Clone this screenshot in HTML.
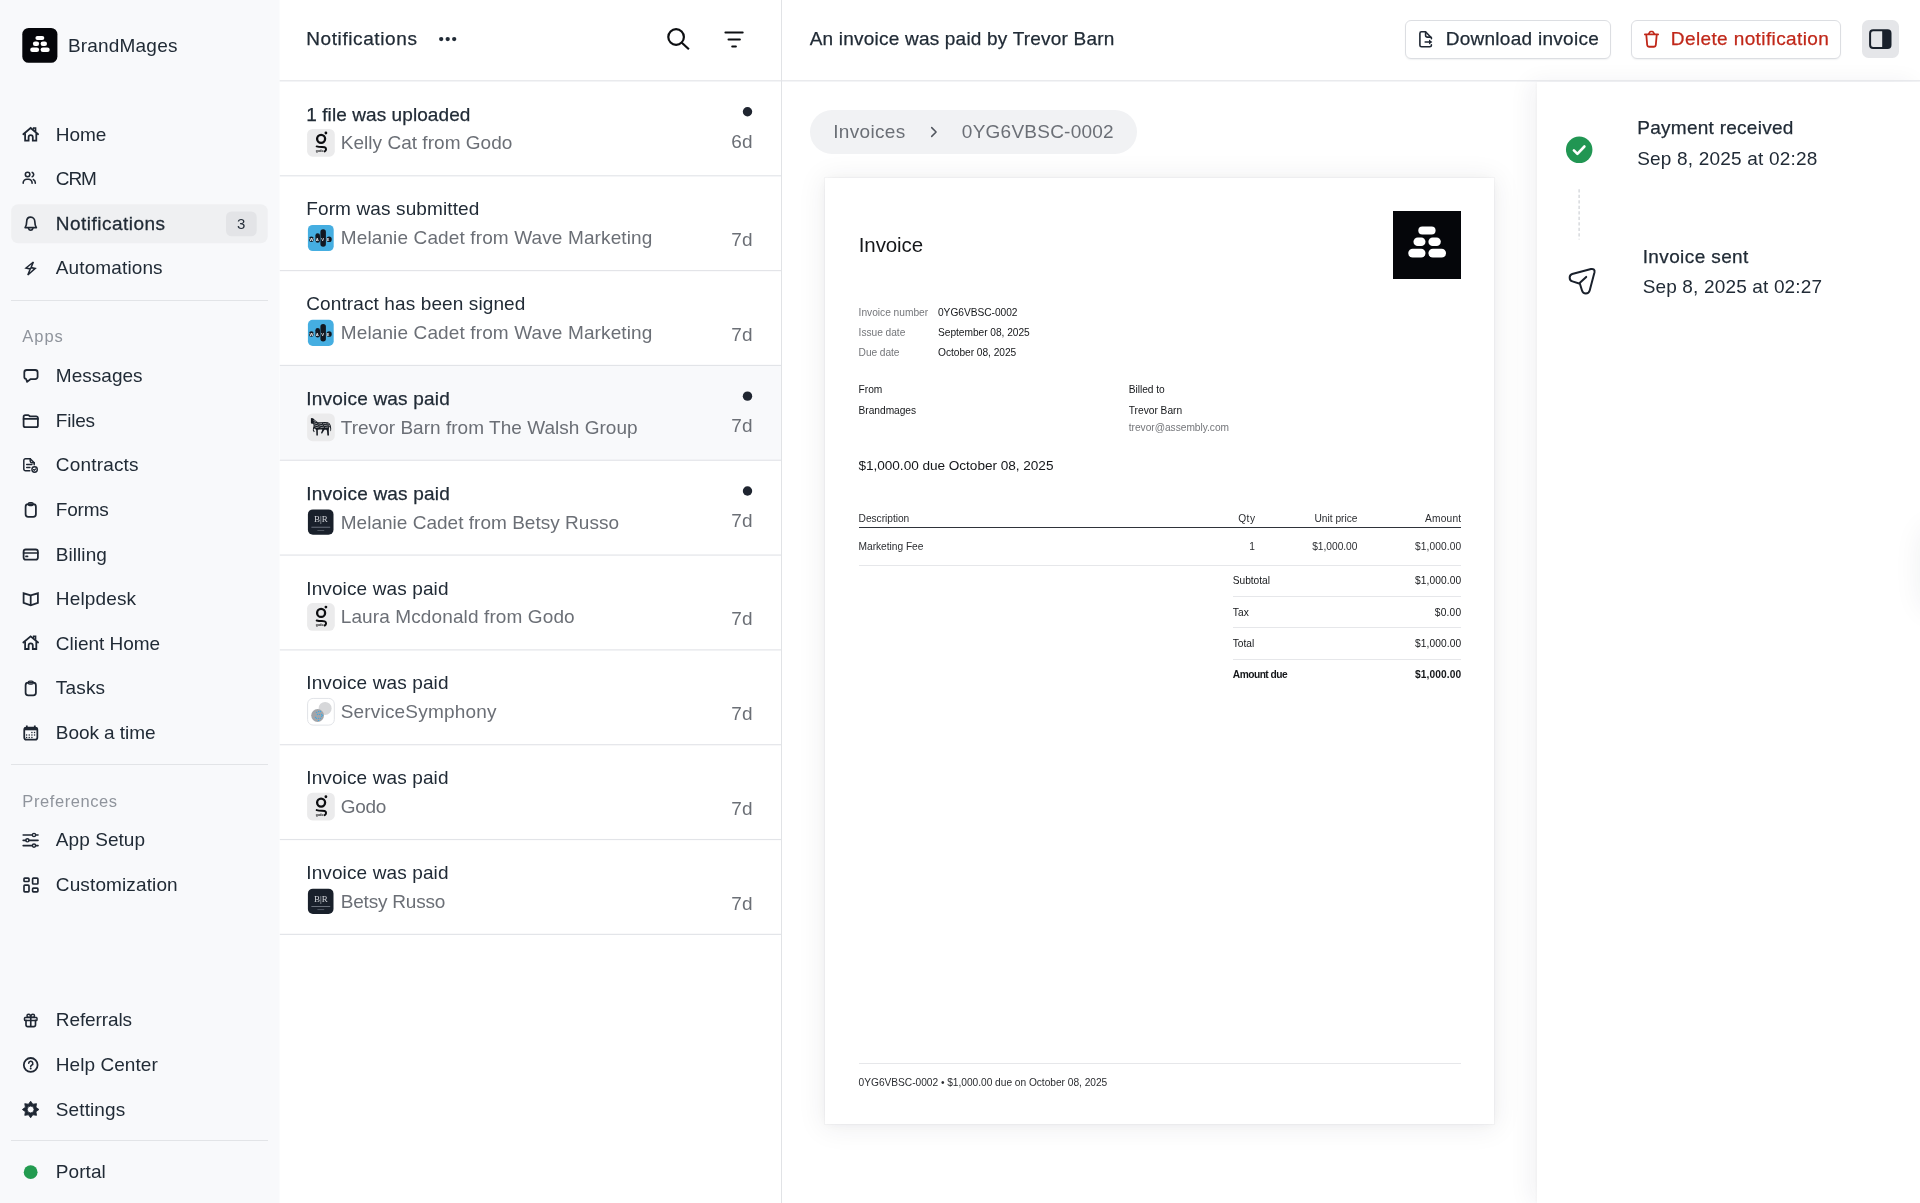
<!DOCTYPE html>
<html lang="en"><head><meta charset="utf-8"><title>Notifications - BrandMages</title>
<style>
html,body{margin:0;padding:0;background:#fff}
body{width:1920px;height:1203px;overflow:hidden;position:relative;font-family:"Liberation Sans",sans-serif}
#root{position:absolute;left:0;top:0;width:1920px;height:1203px;will-change:transform}
.t{position:absolute;white-space:nowrap;line-height:1;margin:0}
.b{position:absolute}
.btn{border:1px solid #dcdee2;border-radius:6px;box-sizing:border-box;background:#fff;box-shadow:0 1px 1.500px rgba(20,30,50,.06)}
.ov{position:absolute;left:0;top:0;pointer-events:none}
</style></head><body><div id="root">
<svg class="ov" width="281" height="1203" viewBox="0 0 281 1203"><rect x="0" y="0" width="279.500" height="1203" fill="#f8f9fb"/></svg>
<svg class="ov" width="280" height="100" viewBox="0 0 280 100"><rect x="22.300" y="27.900" width="35.100" height="34.900" rx="6.300" fill="#05060a"/></svg>
<div class="t" style="top:35px;line-height:21px;left:67.99px;font-size:19px;color:#212b36;letter-spacing:0.185px">BrandMages</div>
<svg class="ov" width="280" height="260" viewBox="0 0 280 260"><rect x="11.200" y="204.300" width="256.500" height="38.900" rx="7" fill="#eff0f2"/><rect x="226" y="211.500" width="30.700" height="24.750" rx="5.500" fill="#e3e4e7"/></svg>
<div class="t" style="top:215px;line-height:17px;left:237.10px;font-size:15px;color:#27303b">3</div>
<div class="t" style="top:124px;line-height:21px;left:55.84px;font-size:19px;color:#212b36;letter-spacing:-0.064px">Home</div>
<div class="t" style="top:168px;line-height:21px;left:55.84px;font-size:19px;color:#212b36;letter-spacing:-1.140px">CRM</div>
<div class="t" style="top:213px;line-height:21px;left:55.84px;font-size:19px;color:#212b36;letter-spacing:0.479px;-webkit-text-stroke:0.28px #212b36">Notifications</div>
<div class="t" style="top:257px;line-height:21px;left:55.84px;font-size:19px;color:#212b36;letter-spacing:0.113px">Automations</div>
<div class="t" style="top:365px;line-height:21px;left:55.84px;font-size:19px;color:#212b36;letter-spacing:0.021px">Messages</div>
<div class="t" style="top:410px;line-height:21px;left:55.84px;font-size:19px;color:#212b36;letter-spacing:-0.219px">Files</div>
<div class="t" style="top:454px;line-height:21px;left:55.84px;font-size:19px;color:#212b36;letter-spacing:0.179px">Contracts</div>
<div class="t" style="top:499px;line-height:21px;left:55.84px;font-size:19px;color:#212b36;letter-spacing:-0.209px">Forms</div>
<div class="t" style="top:544px;line-height:21px;left:55.84px;font-size:19px;color:#212b36;letter-spacing:0.050px">Billing</div>
<div class="t" style="top:588px;line-height:21px;left:55.84px;font-size:19px;color:#212b36;letter-spacing:0.147px">Helpdesk</div>
<div class="t" style="top:633px;line-height:21px;left:55.84px;font-size:19px;color:#212b36;letter-spacing:-0.030px">Client Home</div>
<div class="t" style="top:677px;line-height:21px;left:55.84px;font-size:19px;color:#212b36;letter-spacing:0.168px">Tasks</div>
<div class="t" style="top:722px;line-height:21px;left:55.84px;font-size:19px;color:#212b36;letter-spacing:-0.059px">Book a time</div>
<div class="t" style="top:829px;line-height:21px;left:55.84px;font-size:19px;color:#212b36;letter-spacing:0.063px">App Setup</div>
<div class="t" style="top:874px;line-height:21px;left:55.84px;font-size:19px;color:#212b36;letter-spacing:0.121px">Customization</div>
<div class="t" style="top:1009px;line-height:21px;left:55.84px;font-size:19px;color:#212b36;letter-spacing:-0.105px">Referrals</div>
<div class="t" style="top:1054px;line-height:21px;left:55.84px;font-size:19px;color:#212b36;letter-spacing:0.056px">Help Center</div>
<div class="t" style="top:1099px;line-height:21px;left:55.84px;font-size:19px;color:#212b36;letter-spacing:0.098px">Settings</div>
<div class="t" style="top:1161px;line-height:21px;left:55.84px;font-size:19px;color:#212b36;letter-spacing:0.061px">Portal</div>
<div class="t" style="top:327px;line-height:18px;left:22.34px;font-size:16.5px;color:#8f949c;letter-spacing:0.961px">Apps</div>
<div class="t" style="top:792px;line-height:18px;left:22.34px;font-size:16.5px;color:#8f949c;letter-spacing:0.578px">Preferences</div>
<div class="b" style="left:11px;top:299.6px;width:257px;height:1px;background:#e2e4e7"></div>
<div class="b" style="left:11px;top:764px;width:257px;height:1px;background:#e2e4e7"></div>
<div class="b" style="left:11px;top:1140.2px;width:257px;height:1px;background:#e2e4e7"></div>
<div class="b" style="left:781px;top:0;width:1px;height:1203px;background:#e1e3e6"></div>
<div class="t" style="top:28px;line-height:21px;left:306.24px;font-size:19px;color:#212b36;letter-spacing:0.596px;-webkit-text-stroke:0.25px #212b36">Notifications</div>
<div class="t" style="top:104px;line-height:21px;left:306.24px;font-size:19px;color:#212b36;letter-spacing:0.082px;-webkit-text-stroke:0.25px #212b36">1 file was uploaded</div>
<div class="t" style="top:132px;line-height:21px;left:340.74px;font-size:19px;color:#6b6f76;letter-spacing:0.032px">Kelly Cat from Godo</div>
<div class="t" style="top:131px;line-height:21px;right:1167.50px;font-size:19px;color:#6b6f76">6d</div>
<div class="t" style="top:198px;line-height:21px;left:306.24px;font-size:19px;color:#212b36;letter-spacing:0.123px">Form was submitted</div>
<div class="t" style="top:227px;line-height:21px;left:340.74px;font-size:19px;color:#6b6f76;letter-spacing:0.125px">Melanie Cadet from Wave Marketing</div>
<div class="t" style="top:229px;line-height:21px;right:1167.50px;font-size:19px;color:#6b6f76">7d</div>
<div class="t" style="top:293px;line-height:21px;left:306.24px;font-size:19px;color:#212b36;letter-spacing:0.113px">Contract has been signed</div>
<div class="t" style="top:322px;line-height:21px;left:340.74px;font-size:19px;color:#6b6f76;letter-spacing:0.125px">Melanie Cadet from Wave Marketing</div>
<div class="t" style="top:324px;line-height:21px;right:1167.50px;font-size:19px;color:#6b6f76">7d</div>
<div class="b" style="left:280px;top:365.96px;width:501px;height:93.82px;background:#f8f9fb"></div>
<div class="t" style="top:388px;line-height:21px;left:306.24px;font-size:19px;color:#212b36;letter-spacing:0.211px;-webkit-text-stroke:0.25px #212b36">Invoice was paid</div>
<div class="t" style="top:417px;line-height:21px;left:340.74px;font-size:19px;color:#6b6f76;letter-spacing:0.027px">Trevor Barn from The Walsh Group</div>
<div class="t" style="top:415px;line-height:21px;right:1167.50px;font-size:19px;color:#6b6f76">7d</div>
<div class="t" style="top:483px;line-height:21px;left:306.24px;font-size:19px;color:#212b36;letter-spacing:0.211px;-webkit-text-stroke:0.25px #212b36">Invoice was paid</div>
<div class="t" style="top:512px;line-height:21px;left:340.74px;font-size:19px;color:#6b6f76;letter-spacing:0.018px">Melanie Cadet from Betsy Russo</div>
<div class="t" style="top:510px;line-height:21px;right:1167.50px;font-size:19px;color:#6b6f76">7d</div>
<div class="t" style="top:578px;line-height:21px;left:306.24px;font-size:19px;color:#212b36;letter-spacing:0.118px">Invoice was paid</div>
<div class="t" style="top:606px;line-height:21px;left:340.74px;font-size:19px;color:#6b6f76;letter-spacing:0.115px">Laura Mcdonald from Godo</div>
<div class="t" style="top:608px;line-height:21px;right:1167.50px;font-size:19px;color:#6b6f76">7d</div>
<div class="t" style="top:672px;line-height:21px;left:306.24px;font-size:19px;color:#212b36;letter-spacing:0.118px">Invoice was paid</div>
<div class="t" style="top:701px;line-height:21px;left:340.74px;font-size:19px;color:#6b6f76;letter-spacing:0.180px">ServiceSymphony</div>
<div class="t" style="top:703px;line-height:21px;right:1167.50px;font-size:19px;color:#6b6f76">7d</div>
<div class="t" style="top:767px;line-height:21px;left:306.24px;font-size:19px;color:#212b36;letter-spacing:0.118px">Invoice was paid</div>
<div class="t" style="top:796px;line-height:21px;left:340.74px;font-size:19px;color:#6b6f76;letter-spacing:-0.280px">Godo</div>
<div class="t" style="top:798px;line-height:21px;right:1167.50px;font-size:19px;color:#6b6f76">7d</div>
<div class="t" style="top:862px;line-height:21px;left:306.24px;font-size:19px;color:#212b36;letter-spacing:0.118px">Invoice was paid</div>
<div class="t" style="top:891px;line-height:21px;left:340.74px;font-size:19px;color:#6b6f76;letter-spacing:-0.201px">Betsy Russo</div>
<div class="t" style="top:893px;line-height:21px;right:1167.50px;font-size:19px;color:#6b6f76">7d</div>
<div class="t" style="top:28px;line-height:21px;left:809.74px;font-size:19px;color:#212b36;letter-spacing:0.207px;-webkit-text-stroke:0.25px #212b36">An invoice was paid by Trevor Barn</div>
<div class="b btn" style="left:1405px;top:20px;width:206px;height:39px"></div>
<div class="t" style="top:28px;line-height:21px;left:1445.64px;font-size:19px;color:#212b36;letter-spacing:0.281px;-webkit-text-stroke:0.25px #212b36">Download invoice</div>
<div class="b btn" style="left:1631px;top:20px;width:210px;height:39px"></div>
<div class="t" style="top:28px;line-height:21px;left:1670.84px;font-size:19px;color:#c0281a;letter-spacing:0.384px;-webkit-text-stroke:0.25px #c0281a">Delete notification</div>
<div class="b" style="left:1861.600px;top:20.300px;width:37.600px;height:38.200px;border-radius:6.500px;background:#e5e6e9"></div>
<div class="b" style="left:1536.700px;top:81.500px;width:383.300px;height:1121.500px;background:#fff;box-shadow:-7px 0 22px rgba(30,40,70,.06),-1px 0 3px rgba(30,40,70,.035)"></div>
<div class="t" style="top:117px;line-height:21px;left:1637.24px;font-size:19px;color:#212b36;letter-spacing:0.271px;-webkit-text-stroke:0.25px #212b36">Payment received</div>
<div class="t" style="top:148px;line-height:21px;left:1637.24px;font-size:19px;color:#212b36;letter-spacing:0.195px">Sep 8, 2025 at 02:28</div>
<div class="t" style="top:246px;line-height:21px;left:1642.64px;font-size:19px;color:#212b36;letter-spacing:0.395px;-webkit-text-stroke:0.25px #212b36">Invoice sent</div>
<div class="t" style="top:276px;line-height:21px;left:1642.64px;font-size:19px;color:#212b36;letter-spacing:0.159px">Sep 8, 2025 at 02:27</div>
<div class="b" style="left:1924px;top:530px;width:40px;height:78px;border-radius:10px;box-shadow:0 0 30px 2px rgba(30,40,70,.075)"></div>
<div class="b" style="left:809.700px;top:109.600px;width:327.600px;height:44.500px;border-radius:22.500px;background:#f1f2f4"></div>
<div class="t" style="top:121px;line-height:21px;left:833.24px;font-size:19px;color:#6b6f76;letter-spacing:0.320px">Invoices</div>
<div class="t" style="top:121px;line-height:21px;left:961.84px;font-size:19px;color:#6b6f76;letter-spacing:0.243px">0YG6VBSC-0002</div>
<div class="b" style="left:824.800px;top:177.700px;width:669.600px;height:946.500px;background:#fff;box-shadow:0 0 0 1px rgba(20,30,60,.03),0 1px 10px rgba(20,30,60,.045),0 2px 26px 3px rgba(20,30,60,.065)"></div>
<div class="t" style="top:233px;line-height:23px;left:858.78px;font-size:20.5px;color:#15171a;letter-spacing:-0.104px">Invoice</div>
<div class="b" style="left:1392.800px;top:211px;width:68.200px;height:68px;background:#05060a"></div>
<div class="t" style="top:307px;line-height:11px;left:858.59px;font-size:10.2px;color:#74767a;letter-spacing:-0.011px">Invoice number</div>
<div class="t" style="top:307px;line-height:11px;left:937.99px;font-size:10.2px;color:#15171a;letter-spacing:-0.030px">0YG6VBSC-0002</div>
<div class="t" style="top:327px;line-height:11px;left:858.59px;font-size:10.2px;color:#74767a;letter-spacing:-0.030px">Issue date</div>
<div class="t" style="top:327px;line-height:11px;left:937.99px;font-size:10.2px;color:#15171a;letter-spacing:-0.032px">September 08, 2025</div>
<div class="t" style="top:347px;line-height:11px;left:858.59px;font-size:10.2px;color:#74767a;letter-spacing:-0.057px">Due date</div>
<div class="t" style="top:347px;line-height:11px;left:937.99px;font-size:10.2px;color:#15171a;letter-spacing:-0.029px">October 08, 2025</div>
<div class="t" style="top:384px;line-height:11px;left:858.59px;font-size:10.2px;color:#15171a;letter-spacing:-0.031px">From</div>
<div class="t" style="top:405px;line-height:11px;left:858.59px;font-size:10.2px;color:#15171a;letter-spacing:-0.027px">Brandmages</div>
<div class="t" style="top:384px;line-height:11px;left:1128.79px;font-size:10.2px;color:#15171a;letter-spacing:-0.036px">Billed to</div>
<div class="t" style="top:405px;line-height:11px;left:1128.79px;font-size:10.2px;color:#15171a;letter-spacing:-0.007px">Trevor Barn</div>
<div class="t" style="top:422px;line-height:11px;left:1128.79px;font-size:10.2px;color:#74767a;letter-spacing:-0.026px">trevor@assembly.com</div>
<div class="t" style="top:458px;line-height:15px;left:858.46px;font-size:13.6px;color:#15171a;letter-spacing:-0.026px">$1,000.00 due October 08, 2025</div>
<div class="t" style="top:513px;line-height:11px;left:858.59px;font-size:10.2px;color:#2b2d31;letter-spacing:-0.032px">Description</div>
<div class="t" style="top:513px;line-height:11px;left:1238.19px;font-size:10.2px;color:#2b2d31;letter-spacing:0.470px">Qty</div>
<div class="t" style="top:513px;line-height:11px;left:1314.49px;font-size:10.2px;color:#2b2d31;letter-spacing:-0.009px">Unit price</div>
<div class="t" style="top:513px;line-height:11px;left:1425.09px;font-size:10.2px;color:#2b2d31;letter-spacing:0.190px">Amount</div>
<div class="b" style="left:858.500px;top:526.800px;width:602.500px;height:1.200px;background:#2f333a"></div>
<div class="t" style="top:541px;line-height:11px;left:858.59px;font-size:10.2px;color:#2b2d31;letter-spacing:-0.025px">Marketing Fee</div>
<div class="t" style="top:541px;line-height:11px;left:1249.19px;font-size:10.2px;color:#2b2d31">1</div>
<div class="t" style="top:541px;line-height:11px;left:1312.19px;font-size:10.2px;color:#2b2d31;letter-spacing:-0.010px">$1,000.00</div>
<div class="t" style="top:541px;line-height:11px;left:1415.09px;font-size:10.2px;color:#2b2d31;letter-spacing:0.090px">$1,000.00</div>
<div class="b" style="left:858.500px;top:564.700px;width:602.500px;height:1px;background:#e6e7ea"></div>
<div class="t" style="top:575px;line-height:11px;left:1232.79px;font-size:10.2px;color:#15171a;letter-spacing:-0.033px">Subtotal</div>
<div class="t" style="top:575px;line-height:11px;left:1415.09px;font-size:10.2px;color:#15171a;letter-spacing:0.090px">$1,000.00</div>
<div class="b" style="left:1232.800px;top:596px;width:228.200px;height:1px;background:#e6e7ea"></div>
<div class="t" style="top:607px;line-height:11px;left:1232.79px;font-size:10.2px;color:#15171a;letter-spacing:0.067px">Tax</div>
<div class="t" style="top:607px;line-height:11px;left:1434.79px;font-size:10.2px;color:#15171a;letter-spacing:0.220px">$0.00</div>
<div class="b" style="left:1232.800px;top:627.2px;width:228.200px;height:1px;background:#e6e7ea"></div>
<div class="t" style="top:638px;line-height:11px;left:1232.79px;font-size:10.2px;color:#15171a;letter-spacing:-0.035px">Total</div>
<div class="t" style="top:638px;line-height:11px;left:1415.09px;font-size:10.2px;color:#15171a;letter-spacing:0.090px">$1,000.00</div>
<div class="b" style="left:1232.800px;top:658.8px;width:228.200px;height:1px;background:#e6e7ea"></div>
<div class="t" style="top:669px;line-height:11px;left:1232.79px;font-size:10.2px;color:#15171a;letter-spacing:-0.500px;font-weight:700">Amount due</div>
<div class="t" style="top:669px;line-height:11px;left:1415.09px;font-size:10.2px;color:#15171a;letter-spacing:0.090px;font-weight:700">$1,000.00</div>
<div class="b" style="left:858.500px;top:1062.600px;width:602.500px;height:1px;background:#e6e7ea"></div>
<div class="t" style="top:1077px;line-height:11px;left:858.59px;font-size:10.2px;color:#2b2d31;letter-spacing:-0.027px">0YG6VBSC-0002 • $1,000.00 due on October 08, 2025</div>
<svg class="ov" width="1920" height="1203" viewBox="0 0 1920 1203">
<rect x="35.40" y="36.00" width="8.90" height="4.10" rx="2.05" fill="#fff"/>
<rect x="32.90" y="41.60" width="6.20" height="4.40" rx="2.20" fill="#fff"/>
<rect x="40.60" y="41.60" width="6.40" height="4.40" rx="2.20" fill="#fff"/>
<rect x="30.20" y="47.40" width="8.90" height="4.60" rx="2.30" fill="#fff"/>
<rect x="40.60" y="47.40" width="9.10" height="4.60" rx="2.30" fill="#fff"/>
<path d="M23.3 134.20 L30.65 128.00 L38.1 134.20" fill="none" stroke="#1f2733" stroke-width="1.77" stroke-linejoin="miter" stroke-linecap="round" />
<path d="M25.1 133.20 V140.70 H28.6 V137.20 a2.1 2.1 0 0 1 4.2 0 V140.70 H36.3 V133.20" fill="none" stroke="#1f2733" stroke-width="1.77" stroke-linejoin="miter" stroke-linecap="butt" />
<path d="M33.6 129.60 V128.00 H35.6 V131.40" fill="none" stroke="#1f2733" stroke-width="1.49" stroke-linejoin="miter" stroke-linecap="butt" />
<path d="M23.2 183.20 v-.4 a3.6 3.6 0 0 1 3.6-3.6 h1.7 a3.6 3.6 0 0 1 3.6 3.6 v.4" fill="none" stroke="#1f2733" stroke-width="1.58" stroke-linejoin="round" stroke-linecap="round" />
<circle cx="27.6" cy="174.50" r="2.25" fill="none" stroke="#1f2733" stroke-width="1.58"/>
<path d="M32.2 172.40 a2.3 2.3 0 0 1 0 4.300" fill="none" stroke="#1f2733" stroke-width="1.58" stroke-linejoin="round" stroke-linecap="round" />
<path d="M33.3 179.50 a3.6 3.6 0 0 1 2 3.300 v.4" fill="none" stroke="#1f2733" stroke-width="1.58" stroke-linejoin="round" stroke-linecap="round" />
<path d="M30.700 217.20 C28.200 217.20 26.700 219.20 26.700 221.60 C26.700 224.20 26.200 226.00 25.100 227.60 H36.400 C35.300 226.00 34.800 224.20 34.800 221.60 C34.800 219.20 33.200 217.20 30.700 217.20z" fill="none" stroke="#1f2733" stroke-width="1.67" stroke-linejoin="round" stroke-linecap="round" />
<path d="M28.500 228.60 a2.300 2.300 0 0 0 4.400 0" fill="none" stroke="#1f2733" stroke-width="1.58" stroke-linejoin="round" stroke-linecap="round" />
<path d="M33.400 262.00 L26.000 268.00 L30.300 268.90 L27.800 275.00 L35.200 268.40 L31 267.60 Z" fill="none" stroke="#1f2733" stroke-width="1.49" stroke-linejoin="miter" stroke-linecap="round" />
<path d="M37.600 372.40 v4.400 a2.400 2.400 0 0 1-2.400 2.400 H30.400 L27.100 381.90 L26.200 379.20 A2.400 2.400 0 0 1 24.300 376.80 V372.40 a2.400 2.400 0 0 1 2.400-2.400 h8.500 a2.400 2.400 0 0 1 2.400 2.400z" fill="none" stroke="#1f2733" stroke-width="1.77" stroke-linejoin="round" stroke-linecap="round" />
<path d="M23.600 416.80 a1.700 1.700 0 0 1 1.700-1.700 h3.100 l1.500 1.200 h6.300 a1.700 1.700 0 0 1 1.700 1.700 v7.500 a1.700 1.700 0 0 1-1.700 1.700 H25.300 a1.700 1.700 0 0 1-1.700-1.700z" fill="none" stroke="#1f2733" stroke-width="1.77" stroke-linejoin="round" stroke-linecap="round" />
<path d="M23.600 418.90 H37.900" fill="none" stroke="#1f2733" stroke-width="1.77" stroke-linejoin="round" stroke-linecap="round" />
<path d="M29.800 470.80 H25.500 a1.700 1.700 0 0 1-1.700-1.700 V460.50 a1.700 1.700 0 0 1 1.700-1.700 h4.700 l4 4 v2" fill="none" stroke="#1f2733" stroke-width="1.49" stroke-linejoin="round" stroke-linecap="round" />
<path d="M30.200 458.80 v2.300 a1.700 1.700 0 0 0 1.700 1.700 h2.300" fill="none" stroke="#1f2733" stroke-width="1.49" stroke-linejoin="round" stroke-linecap="round" />
<path d="M26.700 464.40 h5.200 M26.700 467.60 h3.200" fill="none" stroke="#1f2733" stroke-width="1.49" stroke-linejoin="round" stroke-linecap="round" />
<circle cx="34.600" cy="469.50" r="2.700" fill="none" stroke="#1f2733" stroke-width="1.40"/>
<path d="M33.400 469.50 l.900.900 1.500-1.600" fill="none" stroke="#1f2733" stroke-width="1.12" stroke-linejoin="round" stroke-linecap="round" />
<rect x="25.600" y="504.10" width="10.300" height="12.800" rx="2.600" fill="none" stroke="#1f2733" stroke-width="1.77"/>
<rect x="28.200" y="502.70" width="5.100" height="3" rx="1.500" fill="none" stroke="#1f2733" stroke-width="1.21"/>
<rect x="23.600" y="549.50" width="14.300" height="10.100" rx="2.200" fill="none" stroke="#1f2733" stroke-width="1.77"/>
<path d="M23.600 553.00 H37.900" fill="none" stroke="#1f2733" stroke-width="1.67" stroke-linejoin="round" stroke-linecap="round" />
<path d="M26 556.40 h1.500" fill="none" stroke="#1f2733" stroke-width="1.77" stroke-linejoin="round" stroke-linecap="round" />
<path d="M30.700 595.40 L23.600 593.30 V602.90 L30.700 605.30 L37.900 602.90 V593.30 Z" fill="none" stroke="#1f2733" stroke-width="1.77" stroke-linejoin="miter" stroke-linecap="round" />
<path d="M30.700 595.40 V605.30" fill="none" stroke="#1f2733" stroke-width="1.77" stroke-linejoin="round" stroke-linecap="butt" />
<path d="M23.3 642.50 L30.65 636.30 L38.1 642.50" fill="none" stroke="#1f2733" stroke-width="1.77" stroke-linejoin="miter" stroke-linecap="round" />
<path d="M25.1 641.50 V649.00 H28.6 V645.50 a2.1 2.1 0 0 1 4.2 0 V649.00 H36.3 V641.50" fill="none" stroke="#1f2733" stroke-width="1.77" stroke-linejoin="miter" stroke-linecap="butt" />
<path d="M33.6 637.90 V636.30 H35.6 V639.70" fill="none" stroke="#1f2733" stroke-width="1.49" stroke-linejoin="miter" stroke-linecap="butt" />
<rect x="25.600" y="682.60" width="10.300" height="12.800" rx="2.600" fill="none" stroke="#1f2733" stroke-width="1.77"/>
<rect x="28.200" y="681.20" width="5.100" height="3" rx="1.500" fill="none" stroke="#1f2733" stroke-width="1.21"/>
<rect x="24.250" y="727.60" width="13.100" height="12" rx="2.200" fill="none" stroke="#1f2733" stroke-width="1.77"/>
<rect x="24.250" y="727.60" width="13.100" height="2.700" fill="#1f2733"/>
<path d="M26.800 725.60 v1.800 M34.800 725.60 v1.800" fill="none" stroke="#1f2733" stroke-width="1.77" stroke-linejoin="round" stroke-linecap="butt" />
<rect x="31.25" y="731.85" width="1.300" height="1.300" fill="#1f2733"/><rect x="33.90" y="731.85" width="1.300" height="1.300" fill="#1f2733"/><rect x="25.95" y="734.35" width="1.300" height="1.300" fill="#1f2733"/><rect x="28.60" y="734.35" width="1.300" height="1.300" fill="#1f2733"/><rect x="31.25" y="734.35" width="1.300" height="1.300" fill="#1f2733"/><rect x="33.90" y="734.35" width="1.300" height="1.300" fill="#1f2733"/><rect x="25.95" y="736.85" width="1.300" height="1.300" fill="#1f2733"/><rect x="28.60" y="736.85" width="1.300" height="1.300" fill="#1f2733"/><rect x="31.25" y="736.85" width="1.300" height="1.300" fill="#1f2733"/>
<path d="M23.200 835.00 H32.30 M35.70 835.00 H38" fill="none" stroke="#1f2733" stroke-width="1.67" stroke-linejoin="round" stroke-linecap="round" />
<circle cx="34" cy="835.00" r="1.600" fill="none" stroke="#1f2733" stroke-width="1.40"/>
<path d="M23.200 840.30 H25.70 M29.10 840.30 H38" fill="none" stroke="#1f2733" stroke-width="1.67" stroke-linejoin="round" stroke-linecap="round" />
<circle cx="27.4" cy="840.30" r="1.600" fill="none" stroke="#1f2733" stroke-width="1.40"/>
<path d="M23.200 845.60 H32.30 M35.70 845.60 H38" fill="none" stroke="#1f2733" stroke-width="1.67" stroke-linejoin="round" stroke-linecap="round" />
<circle cx="34" cy="845.60" r="1.600" fill="none" stroke="#1f2733" stroke-width="1.40"/>
<rect x="24" y="878.20" width="5" height="3.3" rx=".800" fill="none" stroke="#1f2733" stroke-width="1.67"/>
<rect x="32.6" y="878.20" width="5.3" height="5.8" rx=".800" fill="none" stroke="#1f2733" stroke-width="1.67"/>
<rect x="24" y="885.20" width="5" height="6.7" rx=".800" fill="none" stroke="#1f2733" stroke-width="1.67"/>
<rect x="32.6" y="888.20" width="5.3" height="3.7" rx=".800" fill="none" stroke="#1f2733" stroke-width="1.67"/>
<rect x="24.500" y="1017.40" width="12.500" height="3.100" rx=".800" fill="none" stroke="#1f2733" stroke-width="1.49"/>
<path d="M26 1020.40 v4.700 a1.600 1.600 0 0 0 1.600 1.600 h6.300 a1.600 1.600 0 0 0 1.600-1.600 v-4.700" fill="none" stroke="#1f2733" stroke-width="1.67" stroke-linejoin="round" stroke-linecap="round" />
<path d="M30.750 1017.50 v9.100" fill="none" stroke="#1f2733" stroke-width="1.67" stroke-linejoin="round" stroke-linecap="butt" />
<path d="M30.750 1017.30 h-2.200 a1.550 1.550 0 0 1 0-3.100 c1.500 0 2.200 1.500 2.200 3.100z M30.750 1017.30 h2.200 a1.550 1.550 0 0 0 0-3.100 c-1.500 0-2.200 1.500-2.200 3.100z" fill="none" stroke="#1f2733" stroke-width="1.49" stroke-linejoin="round" stroke-linecap="round" />
<circle cx="30.700" cy="1064.90" r="6.900" fill="none" stroke="#1f2733" stroke-width="1.77"/>
<path d="M28.700 1063.30 a2.050 2.050 0 1 1 3 1.800 c-.700.400-1 .800-1 1.500" fill="none" stroke="#1f2733" stroke-width="1.58" stroke-linejoin="round" stroke-linecap="round" />
<circle cx="30.700" cy="1068.60" r="1" fill="#1f2733"/>
<path d="M30.65 1101.20 L32.83 1104.23 L36.52 1103.63 L35.92 1107.32 L38.95 1109.50 L35.92 1111.68 L36.52 1115.37 L32.83 1114.77 L30.65 1117.80 L28.47 1114.77 L24.78 1115.37 L25.38 1111.68 L22.35 1109.50 L25.38 1107.32 L24.78 1103.63 L28.47 1104.23Z M27.25 1109.50 a3.4 3.4 0 1 0 6.8 0 a3.4 3.4 0 1 0 -6.8 0z" fill="#1f2733" fill-rule="evenodd" stroke="#1f2733" stroke-width="0.84" stroke-linejoin="round"/>
<circle cx="30.650" cy="1172.20" r="6.900" fill="#239b50"/>
<rect x="279.600" y="80.250" width="1640.400" height="1.150" fill="#e2e4e8"/>
<circle cx="441.2" cy="39.100" r="2.150" fill="#212b36"/>
<circle cx="447.7" cy="39.100" r="2.150" fill="#212b36"/>
<circle cx="454.2" cy="39.100" r="2.150" fill="#212b36"/>
<circle cx="676.100" cy="37" r="7.800" fill="none" stroke="#0d0f12" stroke-width="2.200"/>
<path d="M681.800 42.700 L688.900 49.200" fill="none" stroke="#0d0f12" stroke-width="2.2" stroke-linejoin="round" stroke-linecap="butt" />
<path d="M725.400 32.500 H742.700 M728.500 39.400 H739.900 M732.200 46.400 H735.900" fill="none" stroke="#0d0f12" stroke-width="2.0" stroke-linejoin="round" stroke-linecap="round" />
<rect x="279.800" y="175.22" width="501.200" height="1.150" fill="#e2e4e8"/>
<rect x="307.1" y="129.00" width="27.7" height="27.7" rx="5.500" fill="#ebebec"/>
<circle cx="321.10" cy="138.80" r="4" fill="none" stroke="#0c0d10" stroke-width="2.300"/>
<circle cx="325.90" cy="133.00" r="1.400" fill="#0c0d10"/>
<path d="M316.70 146.40 C320.10 147.30 323.10 146.80 324.70 147.30 C326.70 148.00 326.30 150.60 324.70 151.40" fill="none" stroke="#0c0d10" stroke-width="2" stroke-linejoin="round" stroke-linecap="round" />
<text x="315.70" y="151.90" font-size="3.200" font-weight="700" fill="#0c0d10" font-family="Liberation Sans,sans-serif">godo</text>
<circle cx="747.500" cy="111.70" r="4.700" fill="#1f2530"/>
<rect x="279.800" y="270.04" width="501.200" height="1.150" fill="#e2e4e8"/>
<rect x="307.9" y="224.92" width="25.8" height="26.2" rx="4.800" fill="#45aee1"/>
<rect x="309.10" y="236.42" width="4.6" height="5.6" rx="2.30" fill="#121821"/>
<rect x="315.40" y="233.22" width="4.6" height="9.5" rx="2.30" fill="#121821"/>
<rect x="320.40" y="229.22" width="5.5" height="17.5" rx="2.75" fill="#121821"/>
<rect x="326.50" y="236.42" width="5.2" height="5.6" rx="2.60" fill="#121821"/>
<text x="309.50" y="240.92" font-size="4.200" font-weight="700" fill="#e9edf2" letter-spacing="2.600" font-family="Liberation Sans,sans-serif">WAVE</text>
<rect x="279.800" y="364.86" width="501.200" height="1.150" fill="#e2e4e8"/>
<rect x="307.9" y="319.74" width="25.8" height="26.2" rx="4.800" fill="#45aee1"/>
<rect x="309.10" y="331.24" width="4.6" height="5.6" rx="2.30" fill="#121821"/>
<rect x="315.40" y="328.04" width="4.6" height="9.5" rx="2.30" fill="#121821"/>
<rect x="320.40" y="324.04" width="5.5" height="17.5" rx="2.75" fill="#121821"/>
<rect x="326.50" y="331.24" width="5.2" height="5.6" rx="2.60" fill="#121821"/>
<text x="309.50" y="335.74" font-size="4.200" font-weight="700" fill="#e9edf2" letter-spacing="2.600" font-family="Liberation Sans,sans-serif">WAVE</text>
<rect x="279.800" y="459.68" width="501.200" height="1.150" fill="#e2e4e8"/>
<rect x="307.1" y="413.46" width="27.7" height="27.7" rx="5.500" fill="#ebebec"/>
<g transform="translate(307.10,413.46)"><path fill="#141920" d="M3.800 4.700 L5 4.500 L6.600 5.300 L8.400 7 L10.800 8.700 L14 8.800 L17.500 8.500 L20.800 8.800 L22.700 10 L23.700 12.200 L24.100 15 L23.900 17.800 L23.300 17.600 L23.100 14.500 L22.600 13 L21.900 14.600 L21.700 17 L21.900 22.100 L20.300 22.100 L19.900 17.500 L19.300 16.300 L17.400 16.200 L16.200 18 L14.900 20.200 L13.900 19.500 L15 16.800 L15.200 16.100 L12.800 16 L10.700 16.300 L10.800 22.100 L9.300 22.100 L9.100 16.500 L7.900 15.300 L7 15 L6.500 16.400 L7.600 18.100 L6.800 18.700 L5.700 16.800 L6 14.300 L6.500 12.500 L6.200 10.400 L4.500 10.300 L3.800 9.500 Z"/><path stroke="#ebebec" stroke-width=".550" fill="none" d="M6.400 7 l1.600-.5 M6.700 8.800 l2.400-.7 M7 10.700 l3.200-.9 M7.300 12.600 l4-1 M8.300 14.300 l4-.9 M11.300 10.600 l3.600-.6 M12.300 12.400 l3.800-.7 M13.300 14.300 l3.800-.7 M15.800 10.300 l3.600-.3 M17 12.100 l3.600-.4 M18 14 l3.300-.5 M20.300 10.300 l2 .3 M21.500 12 l1.500 .3"/></g>
<circle cx="747.500" cy="396.16" r="4.700" fill="#1f2530"/>
<rect x="279.800" y="554.50" width="501.200" height="1.150" fill="#e2e4e8"/>
<rect x="307.9" y="509.38" width="25.6" height="25.400000000000002" rx="5" fill="#19202b"/>
<text x="320.80" y="522.38" text-anchor="middle" font-size="9" fill="#d2d4d9" font-family="Liberation Serif,serif">B|R</text>
<rect x="311.40" y="526.78" width="18.800" height=".800" fill="#7f8692"/>
<rect x="317.40" y="529.98" width="6.800" height=".800" fill="#5d6470"/>
<circle cx="747.500" cy="490.98" r="4.700" fill="#1f2530"/>
<rect x="279.800" y="649.32" width="501.200" height="1.150" fill="#e2e4e8"/>
<rect x="307.1" y="603.10" width="27.7" height="27.7" rx="5.500" fill="#ebebec"/>
<circle cx="321.10" cy="612.90" r="4" fill="none" stroke="#0c0d10" stroke-width="2.300"/>
<circle cx="325.90" cy="607.10" r="1.400" fill="#0c0d10"/>
<path d="M316.70 620.50 C320.10 621.40 323.10 620.90 324.70 621.40 C326.70 622.10 326.30 624.70 324.70 625.50" fill="none" stroke="#0c0d10" stroke-width="2" stroke-linejoin="round" stroke-linecap="round" />
<text x="315.70" y="626.00" font-size="3.200" font-weight="700" fill="#0c0d10" font-family="Liberation Sans,sans-serif">godo</text>
<rect x="279.800" y="744.14" width="501.200" height="1.150" fill="#e2e4e8"/>
<rect x="307.60" y="698.42" width="26.7" height="26.7" rx="5.500" fill="#fff" stroke="#e1e3e7" stroke-width="1"/>
<circle cx="325.10" cy="708.42" r="6.500" fill="#d6d7d9"/>
<circle cx="317.60" cy="715.52" r="6.400" fill="#a2a5aa"/>
<circle cx="316.50" cy="712.32" r=".650" fill="#3fa9e3"/><circle cx="318.60" cy="711.42" r=".650" fill="#3fa9e3"/><circle cx="320.50" cy="711.52" r=".650" fill="#3fa9e3"/><circle cx="317.50" cy="714.42" r=".650" fill="#3fa9e3"/><circle cx="319.50" cy="714.42" r=".650" fill="#3fa9e3"/><circle cx="321.60" cy="714.42" r=".650" fill="#3fa9e3"/><circle cx="322.50" cy="715.42" r=".650" fill="#3fa9e3"/><circle cx="321.50" cy="716.42" r=".650" fill="#3fa9e3"/><circle cx="315.50" cy="717.42" r=".650" fill="#3fa9e3"/><circle cx="316.50" cy="718.32" r=".650" fill="#3fa9e3"/><circle cx="318.60" cy="718.32" r=".650" fill="#3fa9e3"/><circle cx="320.50" cy="718.32" r=".650" fill="#3fa9e3"/><circle cx="318.60" cy="720.42" r=".650" fill="#3fa9e3"/>
<rect x="279.800" y="838.96" width="501.200" height="1.150" fill="#e2e4e8"/>
<rect x="307.1" y="792.74" width="27.7" height="27.7" rx="5.500" fill="#ebebec"/>
<circle cx="321.10" cy="802.54" r="4" fill="none" stroke="#0c0d10" stroke-width="2.300"/>
<circle cx="325.90" cy="796.74" r="1.400" fill="#0c0d10"/>
<path d="M316.70 810.14 C320.10 811.04 323.10 810.54 324.70 811.04 C326.70 811.74 326.30 814.34 324.70 815.14" fill="none" stroke="#0c0d10" stroke-width="2" stroke-linejoin="round" stroke-linecap="round" />
<text x="315.70" y="815.64" font-size="3.200" font-weight="700" fill="#0c0d10" font-family="Liberation Sans,sans-serif">godo</text>
<rect x="279.800" y="933.78" width="501.200" height="1.150" fill="#e2e4e8"/>
<rect x="307.9" y="888.66" width="25.6" height="25.400000000000002" rx="5" fill="#19202b"/>
<text x="320.80" y="901.66" text-anchor="middle" font-size="9" fill="#d2d4d9" font-family="Liberation Serif,serif">B|R</text>
<rect x="311.40" y="906.06" width="18.800" height=".800" fill="#7f8692"/>
<rect x="317.40" y="909.26" width="6.800" height=".800" fill="#5d6470"/>
<path d="M1431.400 44.900 v.300 a1.600 1.600 0 0 1-1.600 1.600 h-8.300 a1.600 1.600 0 0 1-1.600-1.600 V33.400 a1.600 1.600 0 0 1 1.600-1.600 h4 l5.900 5.900 v1" fill="none" stroke="#1f2733" stroke-width="1.6" stroke-linejoin="round" stroke-linecap="round" />
<path d="M1425.600 32 v3.400 a1.700 1.700 0 0 0 1.700 1.700 h3.400" fill="none" stroke="#1f2733" stroke-width="1.6" stroke-linejoin="round" stroke-linecap="round" />
<path d="M1425.200 42 h4.500" fill="none" stroke="#1f2733" stroke-width="1.6" stroke-linejoin="round" stroke-linecap="round" />
<path d="M1429 39.500 L1432.300 42 L1429 44.500Z" fill="#1f2733"/>
<path d="M1644.900 34.400 H1658.100" fill="none" stroke="#c0281a" stroke-width="1.8" stroke-linejoin="round" stroke-linecap="round" />
<path d="M1648.600 34.200 l1.200-2.100 a1.200 1.200 0 0 1 1-.600 h1.400 a1.200 1.200 0 0 1 1 .600 l1.200 2.100" fill="none" stroke="#c0281a" stroke-width="1.7" stroke-linejoin="round" stroke-linecap="round" />
<path d="M1646.300 34.800 l.900 10.300 a1.800 1.800 0 0 0 1.800 1.650 h5 a1.800 1.800 0 0 0 1.800-1.650 l.900-10.300" fill="none" stroke="#c0281a" stroke-width="1.8" stroke-linejoin="round" stroke-linecap="round" />
<rect x="1870.100" y="30.300" width="20.400" height="17.600" rx="3" fill="none" stroke="#19202b" stroke-width="2"/>
<path d="M1882.200 30.300 h5.300 a3 3 0 0 1 3 3 v11.600 a3 3 0 0 1-3 3 h-5.300z" fill="#19202b"/>
<circle cx="1579.200" cy="149.800" r="13.250" fill="#219653"/>
<path d="M1573.900 150.400 l3.500 3.500 7-7.400" fill="none" stroke="#fff" stroke-width="2.6" stroke-linejoin="round" stroke-linecap="round" />
<path d="M1579.100 189.300 V239.600" fill="none" stroke="#c9ccd2" stroke-width="1.1" stroke-linejoin="round" stroke-linecap="butt" stroke-dasharray="3.300 2.200"/>
<path d="M1572.200 274 L1591 269 C1593.400 268.500 1595 270 1594.500 272.300 L1589.700 290.600 C1588.600 294.500 1583.100 294.500 1582 290.600 L1579.900 283.700 L1572.400 281.400 C1568.800 280.300 1568.800 275 1572.200 274 Z" fill="none" stroke="#19202b" stroke-width="2" stroke-linejoin="round" stroke-linecap="round" />
<path d="M1579.900 282.800 L1586.200 276.900" fill="none" stroke="#19202b" stroke-width="2" stroke-linejoin="round" stroke-linecap="round" />
<path d="M931.700 127.600 l4.400 4.400 -4.400 4.400" fill="none" stroke="#50555d" stroke-width="1.5" stroke-linejoin="round" stroke-linecap="round" />
<rect x="1418.31" y="226.51" width="17.27" height="7.95" rx="3.98" fill="#fff"/>
<rect x="1413.46" y="237.38" width="12.03" height="8.54" rx="4.27" fill="#fff"/>
<rect x="1428.40" y="237.38" width="12.42" height="8.54" rx="4.27" fill="#fff"/>
<rect x="1408.23" y="248.63" width="17.27" height="8.92" rx="4.46" fill="#fff"/>
<rect x="1428.40" y="248.63" width="17.65" height="8.92" rx="4.46" fill="#fff"/>
</svg>
</div></body></html>
